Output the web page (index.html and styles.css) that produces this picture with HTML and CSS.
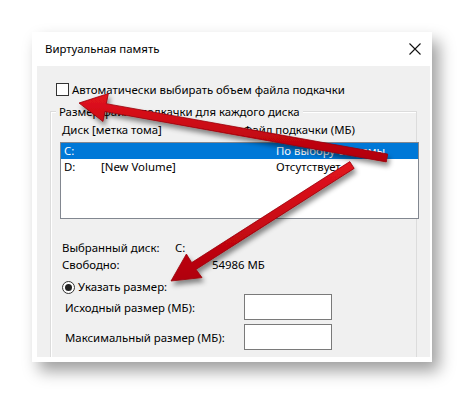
FILE: index.html
```html
<!DOCTYPE html>
<html lang="ru">
<head>
<meta charset="utf-8">
<title>Виртуальная память</title>
<link rel="stylesheet" href="styles.css">
</head>
<body>
<div class="page">
  <div class="dialog">
    <div class="titlebar">
      <span class="title">Виртуальная память</span>
      <svg class="close" width="12" height="12" viewBox="0 0 12 12"><path d="M0.5 0.5 L11.5 11.5 M11.5 0.5 L0.5 11.5" stroke="#111" stroke-width="1.1" fill="none"/></svg>
    </div>
    <div class="body">
      <div class="auto-row">
        <span class="checkbox"></span>
        <span class="label">Автоматически выбирать объем файла подкачки</span>
      </div>
      <div class="group">
        <div class="legend">Размер файла подкачки для каждого диска</div>
        <div class="headers">
          <span class="col1">Диск [метка тома]</span>
          <span class="col2">Файл подкачки (МБ)</span>
        </div>
        <div class="listbox">
          <div class="row selected"><span class="c-drive">C:</span><span class="c-label"></span><span class="c-file">По выбору системы</span></div>
          <div class="row"><span class="c-drive">D:</span><span class="c-label">[New Volume]</span><span class="c-file">Отсутствует</span></div>
        </div>
        <div class="info">
          <div class="info-row"><span class="info-key">Выбранный диск:</span><span class="info-val">C:</span></div>
          <div class="info-row"><span class="info-key">Свободно:</span><span class="info-val free">54986 МБ</span></div>
        </div>
        <div class="radio-row">
          <span class="radio"><span class="dot"></span></span>
          <span class="label">Указать размер:</span>
        </div>
        <div class="field-row first"><span class="field-label">Исходный размер (МБ):</span><span class="input"></span></div>
        <div class="field-row"><span class="field-label">Максимальный размер (МБ):</span><span class="input"></span></div>
      </div>
    </div>
  </div>
  <svg class="arrows" width="465" height="395" viewBox="0 0 465 395">
    <defs>
      <filter id="sh" x="-20%" y="-20%" width="140%" height="160%">
        <feDropShadow dx="2" dy="4" stdDeviation="2.4" flood-color="#000" flood-opacity="0.45"/>
      </filter>
      <linearGradient id="rg" x1="0" y1="0" x2="0" y2="1">
        <stop offset="0" stop-color="#e3141e"/>
        <stop offset="1" stop-color="#b0000a"/>
      </linearGradient>
    </defs>
    <g filter="url(#sh)" fill="url(#rg)" stroke="#980008" stroke-width="0.8" stroke-linejoin="round">
      <path d="M387.7 154.1 L106.3 103.7 L108.4 93.5 L79 103 L103 121.5 L104.9 111.5 L386.3 161.9 Z"/>
      <path d="M349.8 161.6 L191.7 262.6 L186.4 254 L171 281 L202 277.6 L196 269.4 L354.2 168.4 Z"/>
    </g>
  </svg>
</div>
</body>
</html>
```
FILE: styles.css
```css
html, body {
  margin: 0;
  padding: 0;
  background: #fff;
}
.page {
  position: relative;
  width: 465px;
  height: 395px;
  overflow: hidden;
  padding: 32px 0 0 32px;
  box-sizing: border-box;
  font-family: "Noto Sans", "Liberation Sans", sans-serif;
  font-size: 11.4px;
  color: #000;
}
.dialog {
  width: 400px;
  height: 330px;
  background: #fff;
  box-shadow: 7px 9px 15px rgba(0, 0, 0, 0.38);
  display: flex;
  flex-direction: column;
}
.titlebar {
  height: 34px;
  flex: none;
  display: flex;
  align-items: center;
  justify-content: space-between;
  padding: 0 11px 0 13px;
}
.title {
  line-height: 14px;
}
.close {
  display: block;
}
.body {
  flex: 1;
  margin: 0 2px 5px 5px;
  background: #f0f0f0;
  overflow: hidden;
  padding: 17px 0 0 13px;
  box-sizing: border-box;
}
.auto-row {
  display: flex;
  align-items: center;
  height: 13px;
  margin-left: 6px;
  gap: 3px;
}
.checkbox {
  width: 11px;
  height: 11px;
  border: 1px solid #333;
  background: #fff;
  flex: none;
}
.label {
  line-height: 14px;
}
.group {
  margin-top: 15px;
  width: 367px;
  height: 300px;
  border: 1px solid #dcdcdc;
  border-bottom: none;
  box-shadow: inset 1px 1px 0 #fff;
  position: relative;
  box-sizing: border-box;
}
.legend {
  position: absolute;
  top: -8px;
  left: 5px;
  padding: 0 3px;
  background: #f0f0f0;
  line-height: 15px;
}
.headers {
  display: flex;
  margin: 10px 0 0 11px;
  height: 15px;
  line-height: 15px;
}
.col1 {
  width: 181px;
}
.listbox {
  margin: 5px 0 0 9px;
  width: 359px;
  height: 77px;
  box-sizing: border-box;
  border: 1px solid #828790;
  background: #fff;
}
.row {
  display: flex;
  height: 16px;
  line-height: 16px;
  padding-left: 3px;
}
.row.selected {
  background: #0078d7;
  color: #fff;
}
.c-drive {
  width: 37px;
}
.c-label {
  width: 175px;
}
.info {
  margin: 20px 0 0 11px;
}
.info-row {
  display: flex;
  height: 17px;
  line-height: 17px;
}
.info-key {
  width: 113px;
}
.info-val.free {
  margin-left: 37px;
}
.radio-row {
  display: flex;
  align-items: center;
  margin: 7px 0 0 11px;
  height: 14px;
  gap: 3px;
}
.radio {
  width: 11px;
  height: 11px;
  border: 1px solid #333;
  border-radius: 50%;
  background: #fff;
  display: flex;
  align-items: center;
  justify-content: center;
  flex: none;
}
.dot {
  width: 7px;
  height: 7px;
  border-radius: 50%;
  background: #222;
}
.field-row {
  display: flex;
  align-items: center;
  margin: 4px 0 0 14px;
  height: 26px;
}
.field-row.first {
  margin-top: 0;
}
.field-label {
  width: 179px;
}
.input {
  width: 88px;
  height: 26px;
  box-sizing: border-box;
  border: 1px solid #7a7a7a;
  background: #fff;
}
.arrows {
  position: absolute;
  left: 0;
  top: 0;
  pointer-events: none;
}
```
